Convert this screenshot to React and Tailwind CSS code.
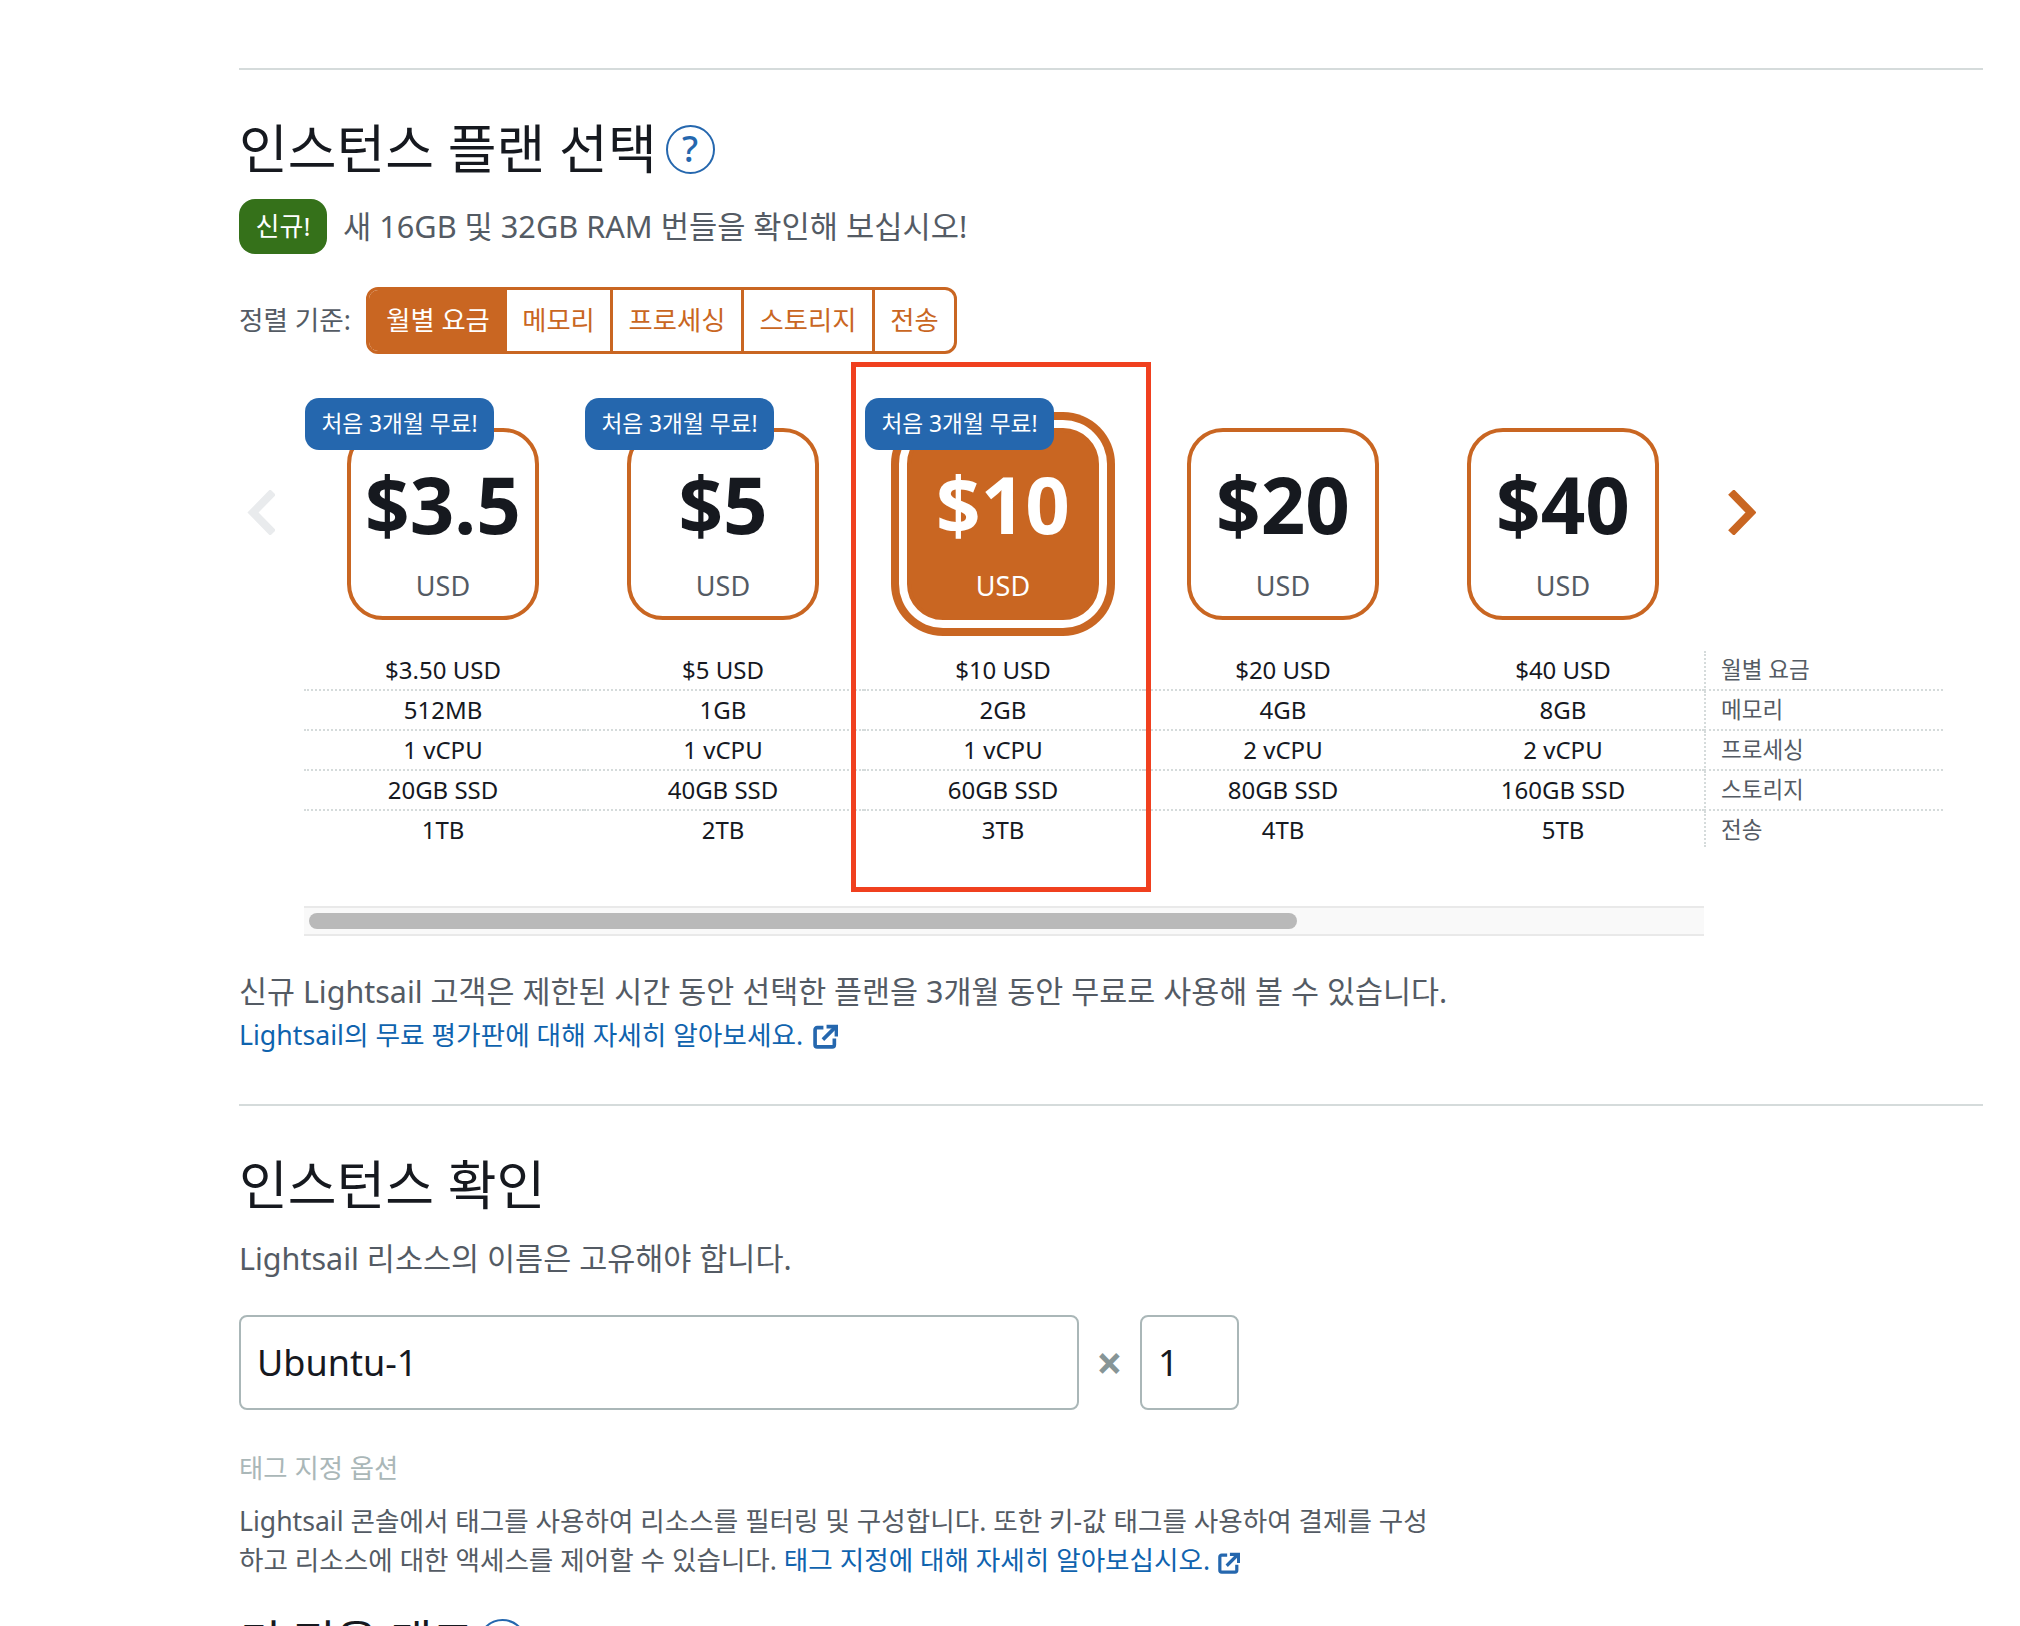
const plans = [
  { price: "$3.5", monthly: "$3.50 USD", mem: "512MB", cpu: "1 vCPU", disk: "20GB SSD", transfer: "1TB", free: true },
  { price: "$5", monthly: "$5 USD", mem: "1GB", cpu: "1 vCPU", disk: "40GB SSD", transfer: "2TB", free: true },
  { price: "$10", monthly: "$10 USD", mem: "2GB", cpu: "1 vCPU", disk: "60GB SSD", transfer: "3TB", free: true, selected: true },
  { price: "$20", monthly: "$20 USD", mem: "4GB", cpu: "2 vCPU", disk: "80GB SSD", transfer: "4TB" },
  { price: "$40", monthly: "$40 USD", mem: "8GB", cpu: "2 vCPU", disk: "160GB SSD", transfer: "5TB" },
];

const labels = ["월별 요금", "메모리", "프로세싱", "스토리지", "전송"];
const sorts = [
  { name: "월별 요금", w: "w-[138px]", active: true },
  { name: "메모리", w: "w-[106px]" },
  { name: "프로세싱", w: "w-[131px]" },
  { name: "스토리지", w: "w-[131px]" },
  { name: "전송", w: "w-[79px]" },
];

function ExternalIcon({ size = 25, className = "ml-[3px]" }) {
  return (
    <svg width={size} height={size} viewBox="0 0 24 24" fill="none" stroke="#2567ae" strokeWidth="3.500" className={className + " inline-block align-[-4px]"}>
      <path d="M10 3.500H4a2 2 0 0 0-2 2V20a2 2 0 0 0 2 2h14.500a2 2 0 0 0 2-2v-6" />
      <path d="M9.500 15 21.500 3" />
      <path d="M13 2.500h9.500V12" />
    </svg>
  );
}

function QuestionMark() {
  return (
    <span className="flex h-[49px] w-[49px] shrink-0 items-center justify-center rounded-full border-2 border-[#2567ae] text-[36px] leading-none font-medium text-[#2567ae]">
      ?
    </span>
  );
}

function PlanCard({ plan }) {
  const txt = plan.selected ? "text-white" : "text-[#16191f]";
  return (
    <div className="relative w-[280px] shrink-0">
      <div className="flex h-[226px] items-start justify-center pt-[38px] pr-[2px]">
        <div
          className={
            plan.selected
              ? "flex h-[192px] w-[192px] flex-col items-center rounded-[36px] border-4 border-[#c96622] bg-[#c96622] text-white shadow-[0_0_0_8px_#ffffff,0_0_0_16px_#c96622]"
              : "flex h-[192px] w-[192px] flex-col items-center rounded-[36px] border-4 border-[#c96622] bg-white"
          }
        >
          <div className={"mt-[20px] text-[78px] leading-[104px] font-bold " + txt}>{plan.price}</div>
          <div className={"mt-[12px] text-[27px] leading-[36px] " + (plan.selected ? "text-white" : "text-[#545b64]")}>USD</div>
        </div>
      </div>
      {plan.free && (
        <div className="absolute top-[8px] left-[1px] flex h-[52px] w-[189px] items-center justify-center rounded-[14px] bg-[#2567ae] text-[22.700px] text-white">
          처음 3개월 무료!
        </div>
      )}
      <div className="mt-[35px] pr-[2px] text-center text-[24px] text-[#16191f]">
        {[plan.monthly, plan.mem, plan.cpu, plan.disk, plan.transfer].map((v, i) => (
          <div key={i} className={"h-[40px] leading-[38px] " + (i < 4 ? "-mr-[2px] border-b-2 border-dotted border-[#d5dbdb] pr-[2px]" : "")}>
            {v}
          </div>
        ))}
      </div>
    </div>
  );
}

export default function App() {
  return (
    <div className="h-[1626px] overflow-hidden bg-white pt-[68px] pl-[239px] pr-[37px] font-['Noto_Sans','Noto_Sans_CJK_KR',sans-serif] text-[#545b64]">
      <div className="border-t-2 border-[#d5dbdb]" />

      <div className="mt-[43px] flex h-[72px] items-center gap-[9px]">
        <h1 className="text-[53px] leading-[72px] font-normal text-[#16191f]">인스턴스 플랜 선택</h1>
        <QuestionMark />
      </div>

      <div className="mt-[14px] flex items-center gap-[16px]">
        <span className="flex h-[55px] w-[88px] items-center justify-center rounded-[16px] bg-[#35711a] text-[26px] text-white">신규!</span>
        <span className="text-[30.700px]">새 16GB 및 32GB RAM 번들을 확인해 보십시오!</span>
      </div>

      <div className="mt-[33px] flex items-center gap-[16px]">
        <span className="w-[111px] text-[26.600px] whitespace-nowrap">정렬 기준:</span>
        <div className="flex h-[67px] overflow-hidden rounded-[12px] border-[3px] border-[#c96622]">
          {sorts.map((s, i) => (
            <div
              key={s.name}
              className={
                "flex items-center justify-center text-[26.300px] " + s.w + " " +
                (s.active ? "bg-[#c96622] text-white" : "text-[#c96622] ") +
                (i > 0 && i < 4 ? " border-r-[3px] border-[#c96622]" : "")
              }
            >
              {s.name}
            </div>
          ))}
        </div>
      </div>

      {/* 플랜 목록 + 좌우 화살표 */}
      <div className="relative mt-[8px]">
        <div className="flex h-[530px] items-start pt-[28px] pl-[65px]">
          {plans.map(p => <PlanCard key={p.price} plan={p} />)}
          <div className="mt-[226px] w-[239px] shrink-0 pt-[35px] text-[22.500px]">
            {labels.map((l, i) => (
              <div key={l} className={"border-l-2 border-dotted border-[#d5dbdb] pl-[15px] leading-[38px] " + (i < 4 ? "h-[40px] border-b-2" : "h-[36px]")}>
                {l}
              </div>
            ))}
          </div>
        </div>

        <svg className="absolute top-[128px] left-[8px]" width="28" height="45" viewBox="0 0 28 45" fill="none">
          <path d="M26 2 6 22.500 26 43" stroke="#e9ebed" strokeWidth="8" />
        </svg>
        <svg className="absolute top-[128px] left-[1489px]" width="28" height="45" viewBox="0 0 28 45" fill="none">
          <path d="M3 2 23 22.500 3 43" stroke="#c96622" strokeWidth="8" />
        </svg>

        {/* 선택 강조 사각형 */}
        <div className="absolute top-0 left-[612px] h-[530px] w-[300px] border-[5px] border-[#f0401f]" />
      </div>

      <div className="mt-[14px] ml-[65px] flex h-[30px] w-[1400px] items-center border-y-2 border-[#e9e9e9] bg-[#f9f9f9] pl-[5px]">
        <div className="h-[16px] w-[988px] rounded-full bg-[#b9b9b9]" />
      </div>

      <p className="mt-[33px] text-[30.450px] leading-[44px]">
        신규 Lightsail 고객은 제한된 시간 동안 선택한 플랜을 3개월 동안 무료로 사용해 볼 수 있습니다.
      </p>
      <p className="text-[26.700px] leading-[44px] text-[#0f63ae]">
        Lightsail의 무료 평가판에 대해 자세히 알아보세요. <ExternalIcon />
      </p>

      <div className="mt-[47px] border-t-2 border-[#d5dbdb]" />

      <h2 className="mt-[43px] text-[53px] leading-[72px] font-normal text-[#16191f]">인스턴스 확인</h2>

      <p className="mt-[15px] text-[30.500px] leading-[44px]">Lightsail 리소스의 이름은 고유해야 합니다.</p>

      <div className="mt-[35px] flex items-center">
        <div className="flex h-[95px] w-[840px] items-center rounded-[8px] border-2 border-[#aab7b8] pl-[16px] text-[36px] text-[#16191f]">Ubuntu-1</div>
        <span className="w-[61px] pb-[2px] text-center text-[46px] leading-none font-bold text-[#879596]">×</span>
        <div className="flex h-[95px] w-[99px] items-center rounded-[8px] border-2 border-[#aab7b8] pl-[16px] text-[36px] text-[#16191f]">1</div>
      </div>

      <p className="mt-[38px] text-[26.400px] leading-[40px] text-[#aab7b8]">태그 지정 옵션</p>

      <div className="mt-[14px] w-[1230px] text-[26.600px] leading-[39px]">
        <p>Lightsail 콘솔에서 태그를 사용하여 리소스를 필터링 및 구성합니다. 또한 키-값 태그를 사용하여 결제를 구성</p>
        <p>
          하고 리소스에 대한 액세스를 제어할 수 있습니다.{" "}
          <span className="text-[#0f63ae]">태그 지정에 대해 자세히 알아보십시오. <ExternalIcon size={22} className="ml-[1px]" /></span>
        </p>
      </div>

      <div className="mt-[24px] flex items-start gap-[3px]">
        <h2 className="text-[46px] leading-[72px] font-normal text-[#16191f]">키 전용 태그</h2>
        <div className="mt-[15px]"><QuestionMark /></div>
      </div>
    </div>
  );
}
